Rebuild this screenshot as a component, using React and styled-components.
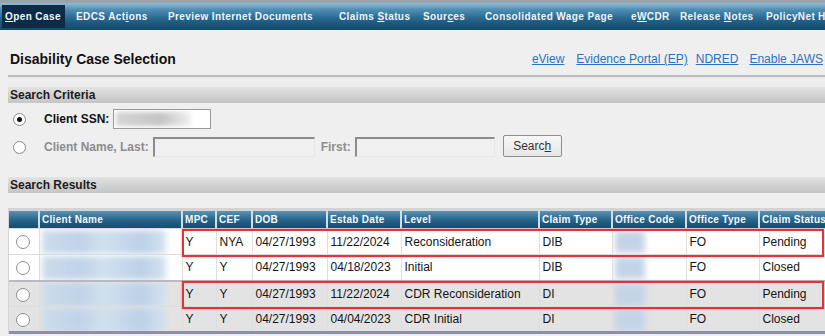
import React from "react";
import styled, { createGlobalStyle } from "styled-components";

const Global = createGlobalStyle`
  html, body { margin: 0; padding: 0; background: #efefef; overflow: hidden; }
  body { font-family: "Liberation Sans", Arial, sans-serif; width: 825px; height: 336px; }
`;

const Page = styled.div`
  width: 825px;
  height: 336px;
  overflow: hidden;
  background: #efefef;
`;

const NavBar = styled.div`
  height: 27px;
  border-top: 3px solid #9aa3aa;
  background: linear-gradient(#8fbdd6 0%, #4f8db2 25%, #2b6a91 55%, #1a5479 80%, #134a6d 100%);
  display: flex;
  align-items: center;
  white-space: nowrap;
  overflow: hidden;
`;

const NavSlot = styled.div`
  flex: 0 0 ${(p) => p.w}px;
  display: flex;
  align-items: center;
`;

const NavItem = styled.span`
  font-size: 10px;
  font-weight: bold;
  letter-spacing: 0.4px;
  color: #eef4f8;
  padding: ${(p) => (p.active ? "6px 4px 6px 3px" : "0")};
  margin-left: ${(p) => (p.active ? "-3px" : "0")};
  background: ${(p) => (p.active ? "#0c2b47" : "transparent")};
  u { text-decoration: underline; }
`;

const TitleRow = styled.div`
  display: flex;
  align-items: center;
  justify-content: space-between;
  height: 30px;
  margin-top: 14px;
  padding-left: 10px;
`;

const Title = styled.h1`
  margin: 0;
  font-size: 14px;
  font-weight: bold;
  color: #111;
`;

const Links = styled.div`
  display: flex;
  gap: 8px;
  white-space: nowrap;
  margin-right: 2px;
`;

const Link = styled.a`
  font-size: 12px;
  color: #2a72c4;
  text-decoration: underline;
  margin-right: ${(p) => p.mr || 0}px;
`;

const Rule = styled.div`
  margin: 1px 0 9px 8px;
  height: 2px;
  background: #bdbdbd;
  border-bottom: 1px solid #e4e4e4;
`;

const SectionBar = styled.div`
  margin-left: 8px;
  height: 16px;
  background: linear-gradient(#e3e3e3, #cfcfcf 60%, #c6c6c6);
  display: flex;
  align-items: center;
  padding-left: 2px;
  font-size: 12px;
  font-weight: bold;
  color: #1d1d1d;
`;

const Criteria = styled.div`
  padding: 6px 0 0 13px;
  display: flex;
  flex-direction: column;
  gap: 8px;
  margin-bottom: 20px;
`;

const CritRow = styled.div`
  display: flex;
  align-items: center;
  height: ${(p) => p.h}px;
`;

const Radio = styled.span`
  width: 11px;
  height: 11px;
  border-radius: 50%;
  border: 1px solid #8a8a8a;
  background: #fff;
  display: inline-flex;
  align-items: center;
  justify-content: center;
  flex: none;
  &::after {
    content: "";
    width: 5px;
    height: 5px;
    border-radius: 50%;
    background: ${(p) => (p.checked ? "#111" : "transparent")};
  }
`;

const Label = styled.span`
  font-size: 12px;
  font-weight: bold;
  color: ${(p) => (p.dim ? "#8d8d8d" : "#111")};
  margin-left: ${(p) => p.ml}px;
  margin-right: 4px;
  white-space: nowrap;
`;

const SsnInput = styled.div`
  width: 96px;
  height: 18px;
  border: 1px solid #9a9a9a;
  background: #fff;
  position: relative;
  overflow: hidden;
`;

const Blur = styled.div`
  position: absolute;
  left: ${(p) => p.l}px;
  top: ${(p) => p.t}px;
  width: ${(p) => p.w}px;
  height: ${(p) => p.h}px;
  background: ${(p) => p.bg};
  filter: blur(${(p) => p.b || 2}px);
`;

const DimInput = styled.div`
  width: ${(p) => p.w}px;
  height: 17px;
  background: #f0f0f0;
  border-top: 2px solid #8c8c8c;
  border-left: 2px solid #8c8c8c;
  border-right: 1px solid #e6e6e6;
  border-bottom: 1px solid #e6e6e6;
`;

const Button = styled.button`
  margin-left: 8px;
  width: 59px;
  height: 22px;
  border: 1px solid #8e8e8e;
  border-radius: 2px;
  background: linear-gradient(#f7f7f7, #e6e6e6);
  font-family: "Liberation Sans", Arial, sans-serif;
  font-size: 12px;
  color: #333;
  padding: 0;
  margin-top: -2px;
  u { text-decoration: underline; }
`;

const TableWrap = styled.div`
  position: relative;
  margin: 15px 0 0 8px;
  border-top: 3px solid #d4d4d4;
  border-left: 1px solid #d4d4d4;
  width: 860px;
`;

const Table = styled.table`
  border-collapse: collapse;
  table-layout: fixed;
  width: 840px;
  border-bottom: 3px solid #8e8ea6;
`;

const Th = styled.th`
  height: 17px;
  padding: 0 0 0 2px;
  text-align: left;
  font-size: 10px;
  font-weight: bold;
  letter-spacing: 0.3px;
  color: #f4f8fb;
  background: linear-gradient(#5f93b3, #2c6a90 45%, #1c587d 75%, #154d70);
  border-right: 2px solid #d3dde4;
  white-space: nowrap;
  overflow: hidden;
`;

const Tr = styled.tr`
  background: ${(p) => (p.shade ? "#e3e3e3" : "#ffffff")};
  height: ${(p) => p.h}px;
  border-top: ${(p) => (p.sep ? "2px solid #b9b9c4" : "1px solid #dcdcdc")};
`;

const Td = styled.td`
  padding: 0 0 0 3px;
  font-size: 12px;
  color: #141414;
  border-right: 1px solid #dedede;
  white-space: nowrap;
  position: relative;
  overflow: hidden;
`;

const CellRadio = styled(Radio)`
  width: 12px;
  height: 12px;
  margin-left: 4px;
  border-color: #8f8f8f;
`;

const Mark = styled.div`
  position: absolute;
  left: 173px;
  top: ${(p) => p.t}px;
  width: 638px;
  height: ${(p) => p.h}px;
  border: 2px solid #e2333a;
  box-shadow: 0 0 2px rgba(226, 51, 58, 0.5);
  pointer-events: none;
`;

const cols = [30, 143, 34, 36, 75, 74, 138, 73, 74, 73, 90];
const heads = ["", "Client Name", "MPC", "CEF", "DOB", "Estab Date", "Level", "Claim Type", "Office Code", "Office Type", "Claim Status"];

const rows = [
  { mpc: "Y", cef: "NYA", dob: "04/27/1993", estab: "11/22/2024", level: "Reconsideration", type: "DIB", ot: "FO", status: "Pending", shade: false, h: 26 },
  { mpc: "Y", cef: "Y", dob: "04/27/1993", estab: "04/18/2023", level: "Initial", type: "DIB", ot: "FO", status: "Closed", shade: false, h: 26 },
  { mpc: "Y", cef: "Y", dob: "04/27/1993", estab: "11/22/2024", level: "CDR Reconsideration", type: "DI", ot: "FO", status: "Pending", shade: true, h: 26, sep: true },
  { mpc: "Y", cef: "Y", dob: "04/27/1993", estab: "04/04/2023", level: "CDR Initial", type: "DI", ot: "FO", status: "Closed", shade: true, h: 26 },
];

const navItems = [
  { w: 71, label: <><u>O</u>pen Case</>, active: true },
  { w: 92, label: <>EDCS Act<u>i</u>ons</> },
  { w: 171, label: <>Preview Internet Documents</> },
  { w: 84, label: <>Claims <u>S</u>tatus</> },
  { w: 62, label: <>Sour<u>c</u>es</> },
  { w: 146, label: <>Consolidated Wage Page</> },
  { w: 49, label: <>e<u>W</u>CDR</> },
  { w: 86, label: <>Release <u>N</u>otes</> },
  { w: 52, label: <>PolicyNet</> },
  { w: 30, label: <>Help</> },
];

export default function App() {
  return (
    <Page>
      <Global />
      <NavBar>
        <NavSlot w={5} />
        {navItems.map((n, i) => (
          <NavSlot key={i} w={n.w}>
            <NavItem active={n.active}>{n.label}</NavItem>
          </NavSlot>
        ))}
      </NavBar>

      <TitleRow>
        <Title>Disability Case Selection</Title>
        <Links>
          <Link mr={4}>eView</Link>
          <Link>Evidence Portal (EP)</Link>
          <Link mr={3}>NDRED</Link>
          <Link>Enable JAWS</Link>
        </Links>
      </TitleRow>
      <Rule />

      <SectionBar>Search Criteria</SectionBar>
      <Criteria>
        <CritRow h={20}>
          <Radio checked />
          <Label ml={18}>Client SSN:</Label>
          <SsnInput>
            <Blur l={2} t={2} w={75} h={14} bg="linear-gradient(90deg,#d6d6d6,#c4c4c4 60%,#f0f0f0)" />
          </SsnInput>
        </CritRow>
        <CritRow h={20}>
          <Radio />
          <Label ml={18} dim>Client Name, Last:</Label>
          <DimInput w={159} />
          <Label ml={6} dim>First:</Label>
          <DimInput w={137} />
          <Button>Searc<u>h</u></Button>
        </CritRow>
      </Criteria>

      <SectionBar>Search Results</SectionBar>

      <TableWrap>
        <Table>
          <colgroup>
            {cols.map((w, i) => <col key={i} style={{ width: w }} />)}
          </colgroup>
          <thead>
            <tr>
              {heads.map((h, i) => <Th key={i}>{h}</Th>)}
            </tr>
          </thead>
          <tbody>
            {rows.map((r, i) => (
              <Tr key={i} shade={r.shade} h={r.h} sep={r.sep}>
                <Td><CellRadio /></Td>
                <Td>
                  <Blur l={2} t={1} w={124} h={r.h - 2} b={3} bg="linear-gradient(90deg,#cddcec,#bfd3e8 30%,#d0e0ef 50%,#bcd0e7 80%,#d3e2f0)" />
                </Td>
                <Td>{r.mpc}</Td>
                <Td>{r.cef}</Td>
                <Td>{r.dob}</Td>
                <Td>{r.estab}</Td>
                <Td>{r.level}</Td>
                <Td>{r.type}</Td>
                <Td>
                  <Blur l={2} t={2} w={30} h={r.h - 4} b={3} bg="#c3d4e7" />
                </Td>
                <Td>{r.ot}</Td>
                <Td>{r.status}</Td>
              </Tr>
            ))}
          </tbody>
        </Table>
        <Mark t={18} h={24} />
        <Mark t={70} h={24} />
      </TableWrap>
    </Page>
  );
}
